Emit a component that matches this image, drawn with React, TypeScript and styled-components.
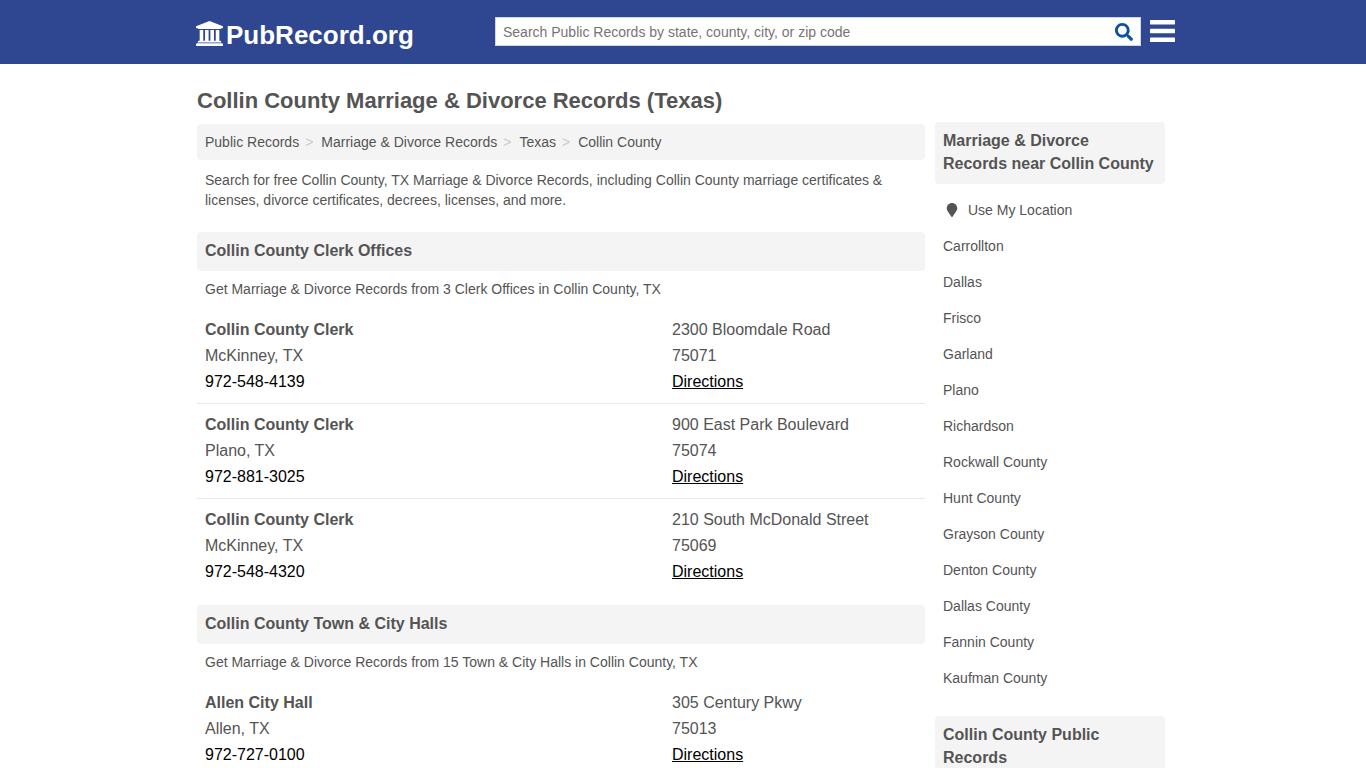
import React from "react";
import styled, { createGlobalStyle } from "styled-components";
import { FaMapMarker, FaSearch } from "react-icons/fa";

const GlobalStyle = createGlobalStyle`
  *, *::before, *::after { box-sizing: border-box; }
  body {
    margin: 0;
    background: #fff;
    color: #545454;
    font-family: "Liberation Sans", Arial, sans-serif;
    font-size: 14px;
    line-height: 20px;
  }
  h1, h2, h3, p, ul, ol { margin: 0; padding: 0; }
  ul, ol { list-style: none; }
  a { color: inherit; text-decoration: none; }
`;

const Header = styled.header`
  background: #2e4790;
`;

const HeaderInner = styled.div`
  display: flex;
  align-items: center;
  max-width: 984px;
  height: 64px;
  margin: 0 auto;
  padding: 0 0 2px 4px;
`;

const Logo = styled.a`
  display: flex;
  align-items: center;
  flex: 0 0 300px;
  gap: 3px;
  padding: 8px 0 0 1px;
  color: #fff;
  font-size: 26px;
  font-weight: bold;
  line-height: 32px;

  svg {
    margin-bottom: 3px;
  }
`;

const SearchForm = styled.form`
  display: flex;
  flex: 1;
  max-width: 646px;
  height: 29px;
  padding-top: 2px;
  background: #fff;
  border: 1px solid #c9d6ee;
`;

const SearchInput = styled.input`
  flex: 1;
  min-width: 0;
  padding: 0 7px;
  border: 0;
  outline: 0;
  background: transparent;
  color: #545454;
  font: inherit;
  &::placeholder { color: #757575; opacity: 1; }
`;

const IconButton = styled.button`
  display: flex;
  align-items: center;
  justify-content: center;
  padding: 0;
  border: 0;
  background: transparent;
  cursor: pointer;
`;

const SearchButton = styled(IconButton)`
  width: 33px;
  color: #0b519c;
`;

const MenuButton = styled(IconButton)`
  margin-left: 9px;
  padding-bottom: 1px;
  color: #fff;
`;

const Page = styled.div`
  display: flex;
  align-items: flex-start;
  gap: 10px;
  max-width: 972px;
  margin: 0 auto;
  padding: 22px 4px 0 0;
`;

const Main = styled.main`
  flex: 1;
  min-width: 0;
`;

const Title = styled.h1`
  font-size: 22px;
  line-height: 30px;
`;

const Breadcrumbs = styled.ol`
  display: flex;
  flex-wrap: wrap;
  margin-top: 8px;
  padding: 8px;
  background: #f4f4f4;
  border-radius: 4px;
`;

const Crumb = styled.li`
  &:not(:last-child)::after {
    content: ">";
    padding: 0 8px 0 6px;
    color: #ccc;
  }
`;

const Text = styled.p`
  padding: 8px 8px 10px;
`;

const Intro = styled(Text)`
  padding: 10px 8px 22px;
`;

const SectionTitle = styled.h2`
  padding: 7px 8px 9px;
  background: #f4f4f4;
  border-radius: 4px;
  font-size: 16px;
  line-height: 23px;
`;

const OfficeList = styled.ul`
  margin-bottom: 12px;
`;

const Office = styled.li`
  display: grid;
  grid-template-columns: 467px 1fr;
  padding: 8px;
  font-size: 16px;
  line-height: 26px;
  &:not(:last-child) { border-bottom: 1px solid #e9e9e9; }
`;

const Column = styled.div`
  display: flex;
  flex-direction: column;
  align-items: flex-start;
`;

const OfficeName = styled.a`
  font-weight: bold;
`;

const Phone = styled.a`
  color: #000;
`;

const Directions = styled.a`
  color: #000;
  text-decoration: underline;
`;

const Sidebar = styled.aside`
  flex: 0 0 230px;
  padding-top: 36px;
`;

const NearbyList = styled.ul`
  padding: 8px 8px 20px;
`;

const Nearby = styled.li`
  padding: 8px 0;
`;

const LocationLink = styled.a`
  display: flex;
  align-items: center;
  gap: 9px;
  padding-left: 2px;
`;

type OfficeData = { name: string; city: string; phone: string; street: string; zip: string };
type SectionData = { title: string; text: string; offices: OfficeData[] };

const sections: SectionData[] = [
  {
    title: "Collin County Clerk Offices",
    text: "Get Marriage & Divorce Records from 3 Clerk Offices in Collin County, TX",
    offices: [
      { name: "Collin County Clerk", city: "McKinney, TX", phone: "972-548-4139", street: "2300 Bloomdale Road", zip: "75071" },
      { name: "Collin County Clerk", city: "Plano, TX", phone: "972-881-3025", street: "900 East Park Boulevard", zip: "75074" },
      { name: "Collin County Clerk", city: "McKinney, TX", phone: "972-548-4320", street: "210 South McDonald Street", zip: "75069" },
    ],
  },
  {
    title: "Collin County Town & City Halls",
    text: "Get Marriage & Divorce Records from 15 Town & City Halls in Collin County, TX",
    offices: [
      { name: "Allen City Hall", city: "Allen, TX", phone: "972-727-0100", street: "305 Century Pkwy", zip: "75013" },
    ],
  },
];

const crumbs = ["Public Records", "Marriage & Divorce Records", "Texas", "Collin County"];

const nearby = [
  "Carrollton", "Dallas", "Frisco", "Garland", "Plano", "Richardson", "Rockwall County",
  "Hunt County", "Grayson County", "Denton County", "Dallas County", "Fannin County", "Kaufman County",
];

function CourthouseIcon() {
  return (
    <svg width="27" height="25" viewBox="0 0 1920 1792" fill="currentColor" aria-hidden="true">
      <path d="M960 0l960 384v128h-128q0 26-20.5 45t-48.5 19h-1526q-28 0-48.5-19t-20.5-45h-128v-128zM256 640h256v768h128v-768h256v768h128v-768h256v768h128v-768h256v768h59q28 0 48.5 19t20.5 45v64h-1664v-64q0-26 20.5-45t48.5-19h59v-768zM1851 1600q28 0 48.5 19t20.5 45v128h-1920v-128q0-26 20.5-45t48.5-19h1782z" />
    </svg>
  );
}

function MenuIcon() {
  return (
    <svg width="25" height="22" viewBox="0 0 25 22" fill="currentColor" aria-hidden="true">
      <rect width="25" height="4.4" rx="0.4" />
      <rect y="8.8" width="25" height="4.4" rx="0.4" />
      <rect y="17.6" width="25" height="4.4" rx="0.4" />
    </svg>
  );
}

function OfficeRow({ office }: { office: OfficeData }) {
  return (
    <Office>
      <Column>
        <OfficeName href="#">{office.name}</OfficeName>
        <span>{office.city}</span>
        <Phone href={`tel:${office.phone}`}>{office.phone}</Phone>
      </Column>
      <Column>
        <span>{office.street}</span>
        <span>{office.zip}</span>
        <Directions href="#">Directions</Directions>
      </Column>
    </Office>
  );
}

export default function App() {
  return (
    <>
      <GlobalStyle />
      <Header>
        <HeaderInner>
          <Logo href="#">
            <CourthouseIcon />
            <span>PubRecord.org</span>
          </Logo>
          <SearchForm role="search" onSubmit={(e) => e.preventDefault()}>
            <SearchInput
              type="text"
              aria-label="Search public records"
              placeholder="Search Public Records by state, county, city, or zip code"
            />
            <SearchButton type="submit" aria-label="Search"><FaSearch size={18} /></SearchButton>
          </SearchForm>
          <MenuButton type="button" aria-label="Menu"><MenuIcon /></MenuButton>
        </HeaderInner>
      </Header>
      <Page>
        <Main>
          <Title>Collin County Marriage &amp; Divorce Records (Texas)</Title>
          <nav aria-label="Breadcrumb">
            <Breadcrumbs>
              {crumbs.map((c) => <Crumb key={c}><a href="#">{c}</a></Crumb>)}
            </Breadcrumbs>
          </nav>
          <Intro>
            Search for free Collin County, TX Marriage &amp; Divorce Records, including Collin County marriage
            certificates &amp; licenses, divorce certificates, decrees, licenses, and more.
          </Intro>
          {sections.map((s) => (
            <section key={s.title}>
              <SectionTitle>{s.title}</SectionTitle>
              <Text>{s.text}</Text>
              <OfficeList>
                {s.offices.map((o) => <OfficeRow key={o.phone} office={o} />)}
              </OfficeList>
            </section>
          ))}
        </Main>
        <Sidebar>
          <SectionTitle>Marriage &amp; Divorce Records near Collin County</SectionTitle>
          <NearbyList>
            <Nearby>
              <LocationLink href="#"><FaMapMarker size={14} aria-hidden />Use My Location</LocationLink>
            </Nearby>
            {nearby.map((n) => <Nearby key={n}><a href="#">{n}</a></Nearby>)}
          </NearbyList>
          <SectionTitle>Collin County Public Records</SectionTitle>
        </Sidebar>
      </Page>
    </>
  );
}
